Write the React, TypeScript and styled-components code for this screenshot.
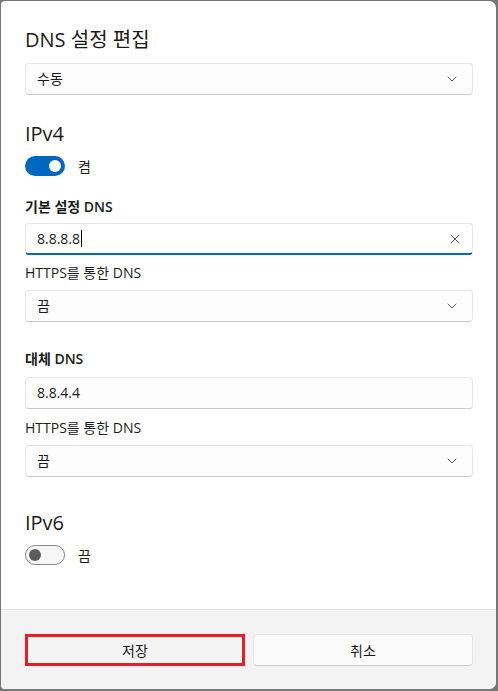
import React from "react";
import styled, { createGlobalStyle } from "styled-components";

const Global = createGlobalStyle`
  html, body { margin: 0; padding: 0; }
  body {
    background: #767676;
    font-family: "Segoe UI", "Open Sans", "Noto Sans CJK KR", sans-serif;
    color: #1b1b1b;
  }
  * { box-sizing: border-box; }
`;

const Frame = styled.div`
  width: 498px;
  height: 691px;
  padding: 1px 2px 2px 1px;
`;

const Dialog = styled.div`
  width: 100%;
  height: 100%;
  background: #ffffff;
  border-radius: 4px 7px 7px 4px;
  display: flex;
  flex-direction: column;
  overflow: hidden;
`;

const Body = styled.div`
  flex: 1;
  padding: 25px 24px 0 24px;
  display: flex;
  flex-direction: column;
`;

const Title = styled.h1`
  margin: 0;
  font-size: 20px;
  line-height: 28px;
  font-weight: 400;
  color: #1a1a1a;
`;

const Heading = styled.h2<{ $mt: number }>`
  margin: ${(p) => p.$mt}px 0 0 0;
  font-size: 20px;
  line-height: 28px;
  font-weight: 400;
  color: #1a1a1a;
`;

const Label = styled.div<{ $mt: number; $bold?: boolean }>`
  margin-top: ${(p) => p.$mt}px;
  font-size: 14px;
  line-height: 20px;
  font-weight: ${(p) => (p.$bold ? 600 : 400)};
  color: #1b1b1b;
`;

const Field = styled.div<{ $mt: number; $focused?: boolean }>`
  margin-top: ${(p) => p.$mt}px;
  height: 32px;
  width: 448px;
  display: flex;
  align-items: center;
  justify-content: space-between;
  padding: 0 12px 0 11px;
  background: ${(p) => (p.$focused ? "#ffffff" : "#fdfdfd")};
  border: 1px solid #e8e8e8;
  border-bottom: ${(p) => (p.$focused ? "2px solid #0067c0" : "1px solid #c9c9c9")};
  border-radius: 4px;
  font-size: 14px;
  color: #1b1b1b;
`;

const FieldText = styled.span`
  display: flex;
  align-items: center;
  line-height: 20px;
`;

const Caret = styled.span`
  display: inline-block;
  width: 1px;
  height: 17px;
  background: #000;
  margin-left: 1px;
`;

const ChevronBox = styled.span`
  display: flex;
  margin-right: 3px;
`;

const ToggleRow = styled.div<{ $mt: number }>`
  margin-top: ${(p) => p.$mt}px;
  display: flex;
  align-items: center;
  gap: 13px;
  font-size: 14px;
  height: 20px;
`;

const Track = styled.div<{ $on: boolean }>`
  width: 40px;
  height: 20px;
  border-radius: 10px;
  position: relative;
  background: ${(p) => (p.$on ? "#0067c0" : "#f6f6f6")};
  border: ${(p) => (p.$on ? "none" : "1px solid #8a8a8a")};
`;

const Knob = styled.div<{ $on: boolean }>`
  position: absolute;
  width: 12px;
  height: 12px;
  border-radius: 50%;
  top: ${(p) => (p.$on ? 4 : 3)}px;
  left: ${(p) => (p.$on ? 24 : 3)}px;
  background: ${(p) => (p.$on ? "#ffffff" : "#5d5d5d")};
`;

const Footer = styled.div`
  height: 80px;
  background: #f3f3f3;
  border-top: 1px solid #e3e3e3;
  padding: 24px 24px 0 24px;
  display: grid;
  grid-template-columns: 220px 220px;
  gap: 8px;
  align-content: start;
`;

const Button = styled.button<{ $highlight?: boolean }>`
  height: 32px;
  font-family: inherit;
  font-size: 14px;
  color: #1b1b1b;
  background: ${(p) => (p.$highlight ? "#f4f4f4" : "#fbfbfb")};
  border: ${(p) => (p.$highlight ? "3px solid #ed1c24" : "1px solid #e5e5e5")};
  border-bottom-color: ${(p) => (p.$highlight ? "#ed1c24" : "#cccccc")};
  border-radius: ${(p) => (p.$highlight ? "0" : "4px")};
  padding: 0;
  display: flex;
  align-items: center;
  justify-content: center;
`;

const Chevron = () => (
  <ChevronBox>
    <svg width="10" height="6" viewBox="0 0 10 6" fill="none">
      <path d="M0.8 0.8 L5 5 L9.2 0.8" stroke="#5c5c5c" strokeWidth="1" />
    </svg>
  </ChevronBox>
);

const Cross = () => (
  <svg width="10" height="10" viewBox="0 0 10 10" fill="none">
    <path d="M0.7 0.7 L9.3 9.3 M9.3 0.7 L0.7 9.3" stroke="#5c5c5c" strokeWidth="1" />
  </svg>
);

export default function App() {
  return (
    <>
      <Global />
      <Frame>
        <Dialog>
          <Body>
            <Title>DNS 설정 편집</Title>
            <Field $mt={9}>
              <FieldText>수동</FieldText>
              <Chevron />
            </Field>

            <Heading $mt={25}>IPv4</Heading>
            <ToggleRow $mt={8}>
              <Track $on>
                <Knob $on />
              </Track>
              <span>켬</span>
            </ToggleRow>

            <Label $mt={21} $bold>기본 설정 DNS</Label>
            <Field $mt={6} $focused>
              <FieldText>
                8.8.8.8
                <Caret />
              </FieldText>
              <Cross />
            </Field>
            <Label $mt={8}>HTTPS를 통한 DNS</Label>
            <Field $mt={7}>
              <FieldText>끔</FieldText>
              <Chevron />
            </Field>

            <Label $mt={27} $bold>대체 DNS</Label>
            <Field $mt={8}>
              <FieldText>8.8.4.4</FieldText>
            </Field>
            <Label $mt={9}>HTTPS를 통한 DNS</Label>
            <Field $mt={7}>
              <FieldText>끔</FieldText>
              <Chevron />
            </Field>

            <Heading $mt={32}>IPv6</Heading>
            <ToggleRow $mt={8}>
              <Track $on={false}>
                <Knob $on={false} />
              </Track>
              <span>끔</span>
            </ToggleRow>
          </Body>
          <Footer>
            <Button $highlight>저장</Button>
            <Button>취소</Button>
          </Footer>
        </Dialog>
      </Frame>
    </>
  );
}
